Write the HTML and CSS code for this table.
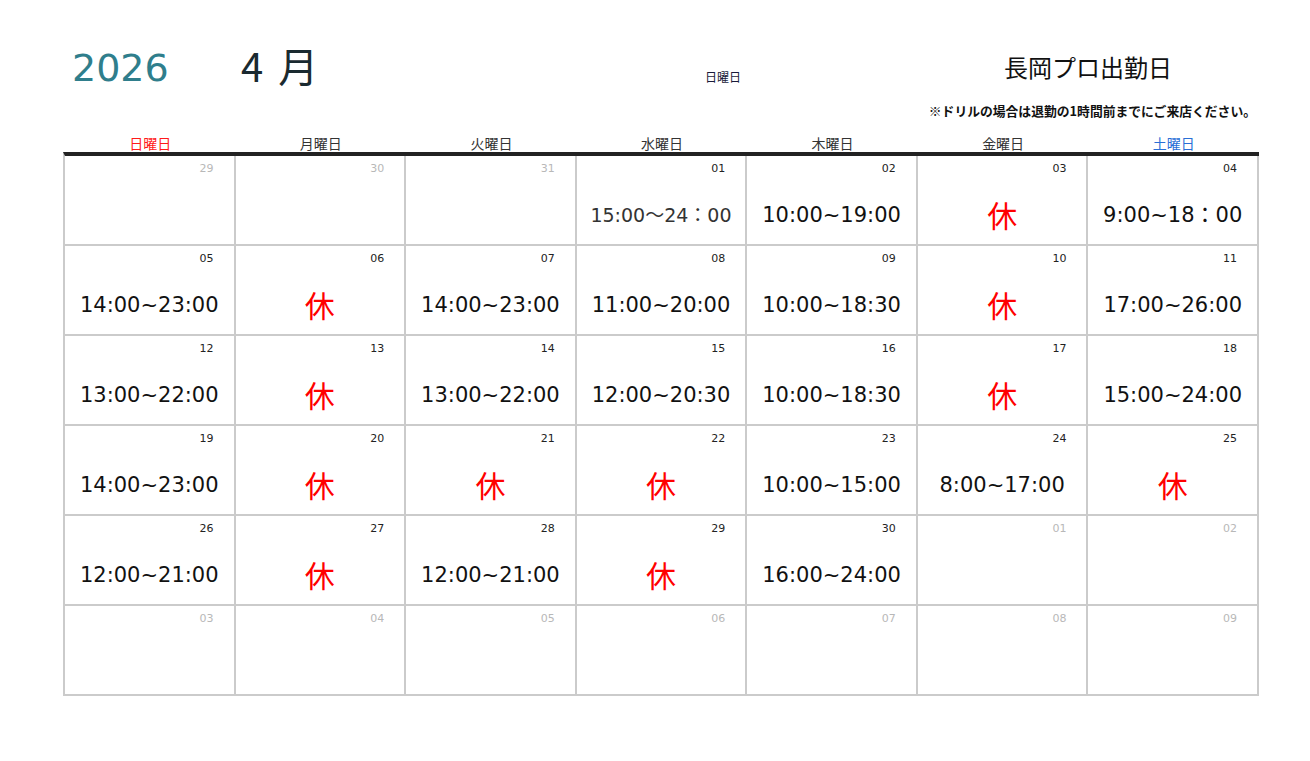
FILE: index.html
```html
<!DOCTYPE html>
<html lang="ja">
<head>
<meta charset="utf-8">
<title>長岡プロ出勤日</title>
<link rel="stylesheet" href="styles.css">
</head>
<body>
<div class="page">
  <header class="title-row">
    <div class="year">2026</div>
    <div class="month">4 月</div>
    <div class="sub">日曜日</div>
    <div class="store">長岡プロ出勤日</div>
  </header>
  <p class="note">※ドリルの場合は退勤の1時間前までにご来店ください。</p>
  <div class="weekdays">
    <div class="wd sun">日曜日</div>
    <div class="wd">月曜日</div>
    <div class="wd">火曜日</div>
    <div class="wd">水曜日</div>
    <div class="wd">木曜日</div>
    <div class="wd">金曜日</div>
    <div class="wd sat">土曜日</div>
  </div>
  <div class="grid">
    <div class="cell"><div class="date other">29</div></div>
    <div class="cell"><div class="date other">30</div></div>
    <div class="cell"><div class="date other">31</div></div>
    <div class="cell"><div class="date">01</div><div class="time alt">15:00～24：00</div></div>
    <div class="cell"><div class="date">02</div><div class="time">10:00~19:00</div></div>
    <div class="cell"><div class="date">03</div><div class="time off">休</div></div>
    <div class="cell"><div class="date">04</div><div class="time">9:00~18：00</div></div>

    <div class="cell"><div class="date">05</div><div class="time">14:00~23:00</div></div>
    <div class="cell"><div class="date">06</div><div class="time off">休</div></div>
    <div class="cell"><div class="date">07</div><div class="time">14:00~23:00</div></div>
    <div class="cell"><div class="date">08</div><div class="time">11:00~20:00</div></div>
    <div class="cell"><div class="date">09</div><div class="time">10:00~18:30</div></div>
    <div class="cell"><div class="date">10</div><div class="time off">休</div></div>
    <div class="cell"><div class="date">11</div><div class="time">17:00~26:00</div></div>

    <div class="cell"><div class="date">12</div><div class="time">13:00~22:00</div></div>
    <div class="cell"><div class="date">13</div><div class="time off">休</div></div>
    <div class="cell"><div class="date">14</div><div class="time">13:00~22:00</div></div>
    <div class="cell"><div class="date">15</div><div class="time">12:00~20:30</div></div>
    <div class="cell"><div class="date">16</div><div class="time">10:00~18:30</div></div>
    <div class="cell"><div class="date">17</div><div class="time off">休</div></div>
    <div class="cell"><div class="date">18</div><div class="time">15:00~24:00</div></div>

    <div class="cell"><div class="date">19</div><div class="time">14:00~23:00</div></div>
    <div class="cell"><div class="date">20</div><div class="time off">休</div></div>
    <div class="cell"><div class="date">21</div><div class="time off">休</div></div>
    <div class="cell"><div class="date">22</div><div class="time off">休</div></div>
    <div class="cell"><div class="date">23</div><div class="time">10:00~15:00</div></div>
    <div class="cell"><div class="date">24</div><div class="time">8:00~17:00</div></div>
    <div class="cell"><div class="date">25</div><div class="time off">休</div></div>

    <div class="cell"><div class="date">26</div><div class="time">12:00~21:00</div></div>
    <div class="cell"><div class="date">27</div><div class="time off">休</div></div>
    <div class="cell"><div class="date">28</div><div class="time">12:00~21:00</div></div>
    <div class="cell"><div class="date">29</div><div class="time off">休</div></div>
    <div class="cell"><div class="date">30</div><div class="time">16:00~24:00</div></div>
    <div class="cell"><div class="date other">01</div></div>
    <div class="cell"><div class="date other">02</div></div>

    <div class="cell"><div class="date other">03</div></div>
    <div class="cell"><div class="date other">04</div></div>
    <div class="cell"><div class="date other">05</div></div>
    <div class="cell"><div class="date other">06</div></div>
    <div class="cell"><div class="date other">07</div></div>
    <div class="cell"><div class="date other">08</div></div>
    <div class="cell"><div class="date other">09</div></div>
  </div>
</div>
</body>
</html>
```

FILE: styles.css
```css
html, body {
  margin: 0;
  padding: 0;
  background: #ffffff;
}

body {
  font-family: "DejaVu Sans", "Noto Sans CJK JP", sans-serif;
  color: #111;
}

.page {
  width: 1196px;
  margin-left: 63px;
}

.title-row {
  display: flex;
  align-items: flex-start;
  height: 62px;
  margin-top: 40px;
  padding-left: 9px;
}

.year {
  width: 169px;
  padding-top: 9px;
  font-family: "DejaVu Sans", sans-serif;
  font-size: 38px;
  line-height: 38px;
  color: #2f7e8c;
}

.month {
  width: 464px;
  padding-top: 5px;
  font-family: "Noto Sans CJK JP", sans-serif;
  font-size: 40px;
  line-height: 40px;
  word-spacing: 6px;
  color: #1a2a30;
}

.sub {
  width: 212px;
  padding-top: 31px;
  font-family: "Noto Sans CJK JP", sans-serif;
  font-size: 12px;
  line-height: 12px;
  color: #1a1a3a;
}

.store {
  width: 342px;
  padding-top: 15px;
  text-align: center;
  font-family: "Noto Sans CJK JP", sans-serif;
  font-size: 24px;
  line-height: 24px;
  color: #111;
}

.note {
  margin: 0 3px 14px 0;
  text-align: right;
  font-family: "Noto Sans CJK JP", sans-serif;
  font-weight: 700;
  font-size: 12.8px;
  line-height: 18px;
  color: #111;
}

.weekdays {
  display: grid;
  grid-template-columns: repeat(7, 1fr);
  padding-left: 2px;
}

.wd {
  text-align: center;
  font-family: "Noto Sans CJK JP", sans-serif;
  font-size: 14px;
  line-height: 18px;
  color: #333;
}

.wd.sun { color: #ff1a1a; }
.wd.sat { color: #2a6fd6; }

.grid {
  display: grid;
  grid-template-columns: repeat(7, 1fr);
  grid-template-rows: 88px repeat(5, 90px);
  border-left: 2px solid #cbcbcb;
  border-top: 4px solid #222222;
  border-bottom: 2px solid #cbcbcb;
}

.cell {
  box-sizing: border-box;
  border-right: 2px solid #cbcbcb;
  border-top: 2px solid #cbcbcb;
  display: flex;
  flex-direction: column;
}

.cell:nth-child(-n+7) {
  border-top: none;
}

.date {
  padding: 7px 20px 0 0;
  text-align: right;
  font-size: 11px;
  line-height: 12px;
  color: #222;
}

.date.other { color: #b8b8b8; }

.time {
  margin-top: 25px;
  text-align: center;
  font-family: "DejaVu Sans", "Noto Sans CJK JP", sans-serif;
  font-size: 21px;
  line-height: 30px;
  color: #111;
  white-space: nowrap;
}

.time.alt {
  font-size: 19px;
  color: #333;
}

.time.off {
  font-family: "Noto Sans CJK JP", sans-serif;
  font-size: 30px;
  line-height: 28px;
  color: #ff0000;
}
```
